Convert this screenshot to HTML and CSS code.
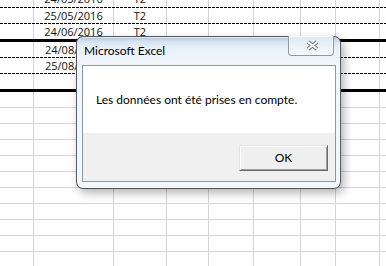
FILE: index.html
```html
<!DOCTYPE html>
<html>
<head>
<meta charset="utf-8">
<link rel="stylesheet" href="styles.css">
</head>
<body>
<div class="sheet">
  <div class="row r-first dash"><div class="c c1"></div><div class="c c2">24/05/2016</div><div class="c c3">T2</div><div class="c c4"></div><div class="c c5"></div><div class="c c6"></div><div class="c c7"></div><div class="c c8"></div><div class="c c9"></div></div>
  <div class="row dash"><div class="c c1"></div><div class="c c2">25/05/2016</div><div class="c c3">T2</div><div class="c c4"></div><div class="c c5"></div><div class="c c6"></div><div class="c c7"></div><div class="c c8"></div><div class="c c9"></div></div>
  <div class="row thick"><div class="c c1"></div><div class="c c2">24/06/2016</div><div class="c c3">T2</div><div class="c c4"></div><div class="c c5"></div><div class="c c6"></div><div class="c c7"></div><div class="c c8"></div><div class="c c9"></div></div>
  <div class="row dash"><div class="c c1"></div><div class="c c2 left">24/08/</div><div class="c c3"></div><div class="c c4"></div><div class="c c5"></div><div class="c c6"></div><div class="c c7"></div><div class="c c8"></div><div class="c c9"></div></div>
  <div class="row dash"><div class="c c1"></div><div class="c c2 left">25/08/</div><div class="c c3"></div><div class="c c4"></div><div class="c c5"></div><div class="c c6"></div><div class="c c7"></div><div class="c c8"></div><div class="c c9"></div></div>
  <div class="row thick"><div class="c c1"></div><div class="c c2"></div><div class="c c3"></div><div class="c c4"></div><div class="c c5"></div><div class="c c6"></div><div class="c c7"></div><div class="c c8"></div><div class="c c9"></div></div>
  <div class="row"><div class="c c1"></div><div class="c c2"></div><div class="c c3"></div><div class="c c4"></div><div class="c c5"></div><div class="c c6"></div><div class="c c7"></div><div class="c c8"></div><div class="c c9"></div></div>
  <div class="row"><div class="c c1"></div><div class="c c2"></div><div class="c c3"></div><div class="c c4"></div><div class="c c5"></div><div class="c c6"></div><div class="c c7"></div><div class="c c8"></div><div class="c c9"></div></div>
  <div class="row"><div class="c c1"></div><div class="c c2"></div><div class="c c3"></div><div class="c c4"></div><div class="c c5"></div><div class="c c6"></div><div class="c c7"></div><div class="c c8"></div><div class="c c9"></div></div>
  <div class="row"><div class="c c1"></div><div class="c c2"></div><div class="c c3"></div><div class="c c4"></div><div class="c c5"></div><div class="c c6"></div><div class="c c7"></div><div class="c c8"></div><div class="c c9"></div></div>
  <div class="row"><div class="c c1"></div><div class="c c2"></div><div class="c c3"></div><div class="c c4"></div><div class="c c5"></div><div class="c c6"></div><div class="c c7"></div><div class="c c8"></div><div class="c c9"></div></div>
  <div class="row"><div class="c c1"></div><div class="c c2"></div><div class="c c3"></div><div class="c c4"></div><div class="c c5"></div><div class="c c6"></div><div class="c c7"></div><div class="c c8"></div><div class="c c9"></div></div>
  <div class="row"><div class="c c1"></div><div class="c c2"></div><div class="c c3"></div><div class="c c4"></div><div class="c c5"></div><div class="c c6"></div><div class="c c7"></div><div class="c c8"></div><div class="c c9"></div></div>
  <div class="row"><div class="c c1"></div><div class="c c2"></div><div class="c c3"></div><div class="c c4"></div><div class="c c5"></div><div class="c c6"></div><div class="c c7"></div><div class="c c8"></div><div class="c c9"></div></div>
  <div class="row"><div class="c c1"></div><div class="c c2"></div><div class="c c3"></div><div class="c c4"></div><div class="c c5"></div><div class="c c6"></div><div class="c c7"></div><div class="c c8"></div><div class="c c9"></div></div>
  <div class="row"><div class="c c1"></div><div class="c c2"></div><div class="c c3"></div><div class="c c4"></div><div class="c c5"></div><div class="c c6"></div><div class="c c7"></div><div class="c c8"></div><div class="c c9"></div></div>
  <div class="row"><div class="c c1"></div><div class="c c2"></div><div class="c c3"></div><div class="c c4"></div><div class="c c5"></div><div class="c c6"></div><div class="c c7"></div><div class="c c8"></div><div class="c c9"></div></div>
</div>

<div class="dialog">
  <div class="titlebar">
    <span class="title">Microsoft Excel</span>
    <div class="close">
      <svg width="13" height="11" viewBox="0 0 13 11">
        <path d="M2 2 L11 9 M11 2 L2 9" stroke="#66717d" stroke-width="4" fill="none"/>
        <path d="M2 2 L11 9 M11 2 L2 9" stroke="#ffffff" stroke-width="2" fill="none"/>
      </svg>
    </div>
  </div>
  <div class="client">
    <div class="msg">Les données ont été prises en compte.</div>
    <div class="actions"><div class="btn">OK</div></div>
  </div>
</div>
</body>
</html>
```

FILE: styles.css
```css
html, body {
  margin: 0;
  padding: 0;
}
body {
  width: 386px;
  height: 266px;
  overflow: hidden;
  position: relative;
  background: #fff;
  font-family: "Open Sans", "Liberation Sans", sans-serif;
}
.sheet {
  margin-top: -9px;
  display: flex;
  flex-direction: column;
}
.row {
  display: flex;
  height: 16px;
  box-sizing: border-box;
  border-bottom: 1px solid #d4d4d4;
  position: relative;
}
.row.r-first {
  height: 17px;
}
.row.dash {
  border-bottom: 1px solid transparent;
  background-image: repeating-linear-gradient(90deg, #000 0 3px, transparent 3px 4px);
  background-size: 100% 1px;
  background-repeat: no-repeat;
  background-position: 0 100%;
  background-origin: border-box;
}
.row.thick {
  height: 18px;
  border-bottom: 3px solid #000;
}
.c {
  box-sizing: border-box;
  border-right: 1px solid #d4d4d4;
  flex: none;
  font-size: 11px;
  color: #111;
  text-align: center;
  line-height: 15px;
  white-space: nowrap;
  overflow: hidden;
}
.c.left {
  text-align: left;
  padding-left: 11px;
}
.c1 { width: 34px; }
.c2 { width: 80px; }
.c3 { width: 53px; }
.c4 { width: 42px; }
.c5 { width: 45px; }
.c6 { width: 47px; }
.c7 { width: 35px; }
.c8 { width: 44px; }
.c9 { flex: 1; border-right: none; }

.dialog {
  position: absolute;
  left: 76px;
  top: 36px;
  width: 265px;
  height: 153px;
  box-sizing: border-box;
  border: 1px solid rgba(55, 62, 70, 0.85);
  border-radius: 7px;
  background: linear-gradient(180deg, #afc0d2 0px, #d2e0ee 4px, #e7f0f9 10px, #f1f6fb 24px, #f3f6f9 100%);
  box-shadow: 3px 4px 10px rgba(0, 0, 0, 0.3), inset 0 0 0 1px rgba(255, 255, 255, 0.6);
  display: flex;
  flex-direction: column;
  font-family: "Lato", "Open Sans", sans-serif;
}
.titlebar {
  height: 28px;
  display: flex;
  justify-content: space-between;
  align-items: flex-start;
  padding: 0 6px 0 7px;
  flex: none;
}
.title {
  padding-top: 6px;
  font-size: 12px;
  line-height: 16px;
  color: #000;
}
.close {
  margin-top: -1px;
  width: 46px;
  height: 20px;
  box-sizing: border-box;
  border: 1px solid #8a96a3;
  border-top: none;
  border-radius: 0 0 4px 4px;
  background: linear-gradient(180deg, #dfe8f1 0%, #eef3f8 60%, #f3f7fb 100%);
  box-shadow: inset 0 0 0 1px rgba(255, 255, 255, 0.7);
  display: flex;
  align-items: center;
  justify-content: center;
  padding-left: 3px;
}
.close svg {
  display: block;
}
.client {
  margin: 0 4px 6px 5px;
  height: 117px;
  box-sizing: border-box;
  border: 1px solid #8f979f;
  display: flex;
  flex-direction: column;
  flex: none;
}
.msg {
  height: 67px;
  box-sizing: border-box;
  background: #fff;
  padding: 26px 0 0 13px;
  font-size: 12px;
  line-height: 16px;
  color: #000;
  flex: none;
}
.actions {
  flex: 1;
  background: #f0f0f0;
  display: flex;
  justify-content: flex-end;
  align-items: flex-start;
  padding: 12px 7px 0 0;
}
.btn {
  width: 89px;
  height: 26px;
  box-sizing: border-box;
  border: 1px solid;
  border-color: #e3e3e3 #696969 #696969 #e3e3e3;
  box-shadow: inset 1px 1px 0 #fff, inset -1px -1px 0 #a0a0a0;
  background: #efefef;
  font-size: 12px;
  line-height: 23px;
  text-align: center;
  color: #000;
}
```
